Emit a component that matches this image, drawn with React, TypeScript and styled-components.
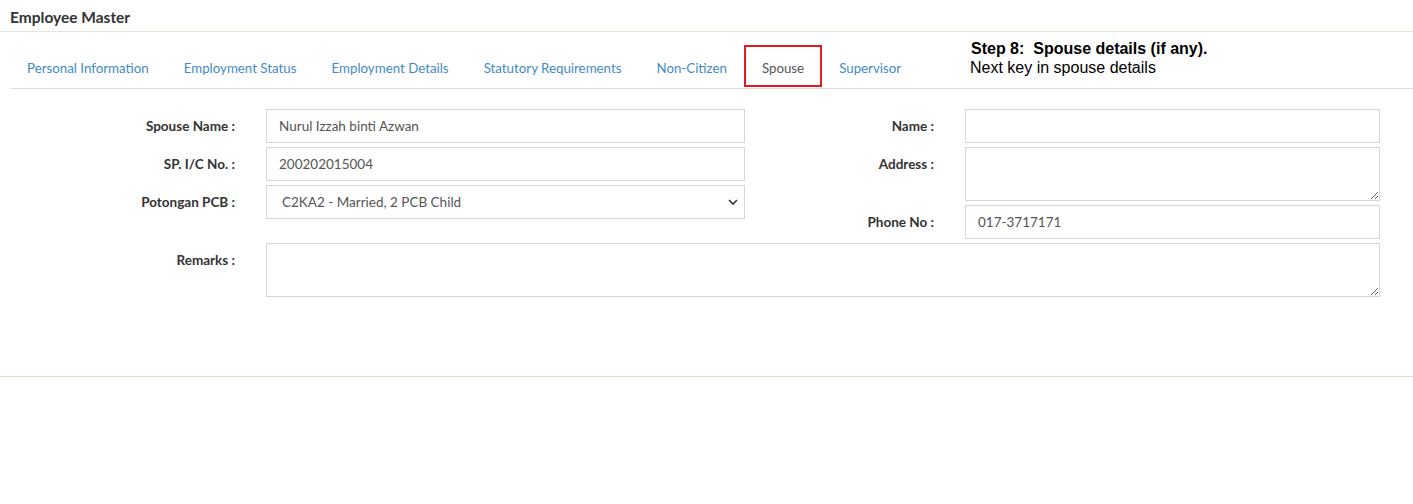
import styled, { createGlobalStyle } from "styled-components";

const GlobalStyle = createGlobalStyle`
	body {
		margin: 0;
		background: #fff;
		font-family: Lato, "Noto Sans", sans-serif;
		color: #333;
	}
`;

const tabs = [
	"Personal Information",
	"Employment Status",
	"Employment Details",
	"Statutory Requirements",
	"Non-Citizen",
	"Spouse",
	"Supervisor"
];

const App = () => {
	return (
		<Page>
			<GlobalStyle />
			<Header>Employee Master</Header>
			<TabBar>
				{tabs.map((t) => (
					<Tab key={t} active={t === "Spouse"}>
						{t}
					</Tab>
				))}
				<Callout>
					<strong>Step 8:&nbsp; Spouse details (if any).</strong>
					<span>Next key in spouse details</span>
				</Callout>
			</TabBar>
			<Form>
				<Columns>
					<FieldGroup labelWidth={256} fieldWidth={479}>
						<Label>Spouse Name :</Label>
						<Input defaultValue="Nurul Izzah binti Azwan" />
						<Label>SP. I/C No. :</Label>
						<Input defaultValue="200202015004" />
						<Label>Potongan PCB :</Label>
						<SelectWrap>
							<Select defaultValue="C2KA2">
								<option value="C2KA2">C2KA2 - Married, 2 PCB Child</option>
							</Select>
							<Chevron viewBox="0 0 10 6">
								<path d="M1 1l4 4 4-4" />
							</Chevron>
						</SelectWrap>
					</FieldGroup>
					<FieldGroup labelWidth={220} fieldWidth={415}>
						<Label>Name :</Label>
						<Input />
						<Label>Address :</Label>
						<TextArea />
						<Label>Phone No :</Label>
						<Input defaultValue="017-3717171" />
					</FieldGroup>
				</Columns>
				<FieldGroup labelWidth={256} fieldWidth={1114}>
					<Label>Remarks :</Label>
					<TextArea />
				</FieldGroup>
			</Form>
			<Footer />
		</Page>
	);
};
export default App;

// =============================================================================
// Styled Components
// =============================================================================
const Page = styled.div`
	width: 1413px;
	min-height: 504px;
	background: #fff;
`;

const Header = styled.div`
	height: 32px;
	padding: 3px 0 0 10px;
	display: flex;
	align-items: center;
	font-size: 15.5px;
	font-weight: 700;
	color: #333;
	border-bottom: 1px solid #dfe9d6;
	box-sizing: border-box;
`;

const TabBar = styled.div`
	position: relative;
	margin: 12px 0 0 11px;
	display: flex;
	align-items: flex-end;
	height: 44px;
	border-bottom: 1px solid #dedede;
`;

const Tab = styled.div<{ active?: boolean }>`
	height: 42px;
	box-sizing: border-box;
	display: flex;
	align-items: center;
	padding: 3px 15.5px 0;
	margin-bottom: 1px;
	font-size: 13.3px;
	color: ${(p) => (p.active ? "#555" : "#3f8bc9")};
	border: 2px solid ${(p) => (p.active ? "#e31b23" : "transparent")};
	white-space: nowrap;
	&:first-child {
		margin-left: -1.5px;
	}
`;

const Callout = styled.div`
	position: absolute;
	left: 959px;
	top: -5px;
	display: flex;
	flex-direction: column;
	font-family: "Liberation Sans", Arial, sans-serif;
	color: #000;
	strong {
		font-size: 16px;
		line-height: 19px;
		padding-left: 1px;
	}
	span {
		font-size: 16px;
		line-height: 19px;
	}
`;

const Form = styled.div`
	padding: 20px 0 0 10px;
	display: flex;
	flex-direction: column;
	gap: 4px;
`;

const Columns = styled.div`
	display: flex;
	align-items: flex-start;
`;

const FieldGroup = styled.div<{ labelWidth: number; fieldWidth: number }>`
	display: grid;
	grid-template-columns: ${(p) => p.labelWidth}px ${(p) => p.fieldWidth}px;
	row-gap: 4px;
	align-items: start;
`;

const Label = styled.label`
	line-height: 34px;
	text-align: right;
	padding-right: 31px;
	font-size: 13.5px;
	font-weight: 700;
	color: #333;
`;

const fieldStyle = `
	box-sizing: border-box;
	width: 100%;
	border: 1px solid #d2d6de;
	border-radius: 0;
	background: #fff;
	font-family: Lato, "Noto Sans", sans-serif;
	font-size: 13.5px;
	color: #555;
	outline: none;
`;

const Input = styled.input`
	${fieldStyle}
	height: 34px;
	padding: 0 12px;
`;

const TextArea = styled.textarea`
	${fieldStyle}
	height: 54px;
	padding: 6px 12px;
	display: block;
	resize: vertical;
`;

const SelectWrap = styled.div`
	position: relative;
`;

const Select = styled.select`
	${fieldStyle}
	height: 34px;
	padding: 0 12px 0 15px;
	appearance: none;
`;

const Chevron = styled.svg`
	position: absolute;
	right: 7px;
	top: 14px;
	width: 10px;
	height: 6px;
	fill: none;
	stroke: #333;
	stroke-width: 1.6;
`;

const Footer = styled.div`
	margin-top: 79px;
	border-top: 1px solid #d6ecc6;
`;
